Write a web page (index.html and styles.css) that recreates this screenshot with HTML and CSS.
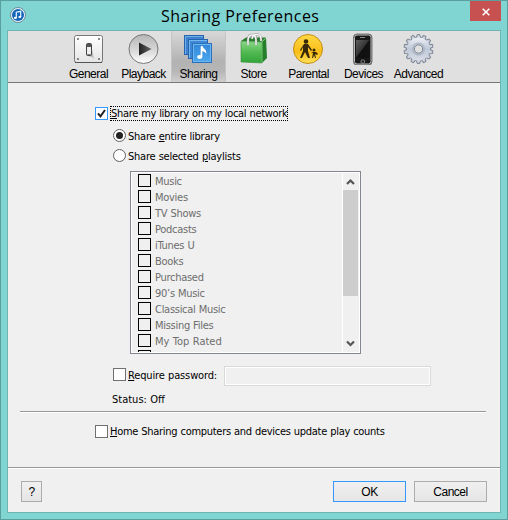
FILE: index.html
```html
<!DOCTYPE html>
<html lang="en">
<head>
<meta charset="utf-8">
<title>Sharing Preferences</title>
<link rel="stylesheet" href="styles.css">
</head>
<body>
<div class="window">
  <header class="titlebar">
    <svg class="app-icon" width="16" height="16" viewBox="0 0 16 16"><circle cx="8" cy="8" r="7.5" fill="#e7f3f8" stroke="#58798c" stroke-width=".8"/><circle cx="8" cy="8" r="6" fill="#1765b8"/><path d="M6.3 10.8V5.2L10.7 4.3V9.9" fill="none" stroke="#e5f7ff" stroke-width="1.2"/><ellipse cx="5.4" cy="10.9" rx="1.5" ry="1.1" fill="#fff"/><ellipse cx="9.8" cy="10" rx="1.5" ry="1.1" fill="#fff"/></svg>
    <h1 class="title"><span>Sharing Preferences</span></h1>
    <button class="close" aria-label="Close"><svg width="8" height="8" viewBox="0 0 8 8"><path d="M.7.7 7.3 7.3M7.3.7.7 7.3" stroke="#fff" stroke-width="1.6"/></svg></button>
  </header>
  <main class="client">
    <nav class="toolbar">
      <div class="tool">
        <svg width="34" height="34" viewBox="0 0 34 34"><defs><linearGradient id="plate" x2="0" y2="1"><stop stop-color="#fff"/><stop offset="1" stop-color="#e4e4e4"/></linearGradient></defs><rect x="2.5" y="4.5" width="28" height="27" rx="2" fill="url(#plate)" stroke="#777"/><path d="M3 31.5H30" stroke="#555"/><g fill="#555"><circle cx="6" cy="8" r=".9"/><circle cx="27" cy="8" r=".9"/><circle cx="6" cy="28" r=".9"/><circle cx="27" cy="28" r=".9"/></g><path d="M15 25 20 26 22 28 20 18z" fill="#bbb"/><rect x="14.5" y="12.5" width="5" height="12" rx="1" fill="#eee" stroke="#444"/><path d="M15 13h4v3h-4z" fill="#555"/><path d="M15 23.5h4" stroke="#888"/></svg>
        <span class="label">General</span>
      </div>
      <div class="tool">
        <svg width="34" height="34" viewBox="0 0 34 34"><defs><linearGradient id="play" x2="0" y2="1"><stop stop-color="#b6b6b6"/><stop offset=".5" stop-color="#d4d4d4"/><stop offset="1" stop-color="#fff"/></linearGradient><linearGradient id="tri"><stop stop-color="#222"/><stop offset="1" stop-color="#666"/></linearGradient></defs><circle cx="16.5" cy="18" r="14.5" fill="url(#play)" stroke="#777"/><path d="M12 11.5 24.5 18 12 24.5z" fill="url(#tri)"/></svg>
        <span class="label">Playback</span>
      </div>
      <div class="tool selected">
        <svg width="34" height="34" viewBox="0 0 34 34"><defs><linearGradient id="blue" x2="0" y2="1"><stop stop-color="#3284d6"/><stop offset="1" stop-color="#4ca9ef"/></linearGradient></defs><rect x="2.5" y="4.5" width="19" height="19" fill="#3d82d1" stroke="#2864ad"/><path d="M3.5 23V5.5H21" fill="none" stroke="#6eafe8"/><rect x="6.5" y="8.5" width="19" height="19" fill="#3c88d7" stroke="#2864ad"/><path d="M7.5 27V9.5H25" fill="none" stroke="#75b6ed"/><rect x="10.5" y="12.5" width="19" height="19" fill="url(#blue)" stroke="#2a70bb"/><rect x="11.5" y="13.5" width="17" height="17" fill="none" stroke="#6eb7ee"/><path d="M19.5 15.5V26" stroke="#fff" stroke-width="1.7"/><path d="M19 15H20.5C21 18 25 18 24.2 23 23.5 20.5 20.5 20.5 20 20z" fill="#fff"/><ellipse cx="17.7" cy="26" rx="2.6" ry="1.9" fill="#fff"/></svg>
        <span class="label">Sharing</span>
      </div>
      <div class="tool">
        <svg width="34" height="34" viewBox="0 0 34 34"><defs><linearGradient id="bag" x2="0" y2="1"><stop stop-color="#8ad788"/><stop offset=".5" stop-color="#51b951"/><stop offset="1" stop-color="#31a438"/></linearGradient></defs><path d="m4 10 5-3.5h20L24 11z" fill="#287d2a"/><path d="M24 11 29 6.5 30 27 25 32z" fill="#257f2b"/><path d="M4 10.5 25 11v21L4 31z" fill="url(#bag)" stroke="#35923a" stroke-width=".6"/><path d="M25 11V32M29 7 25 11" stroke="#7fca7b" stroke-width=".8"/><path d="M11 14V8.5C12 2 19 3 19 9V14M15 8C16 1.5 24 2.5 24 8V10" fill="none" stroke="#8c8c8c" stroke-width="2.4"/><path d="M11 14V8.5C12 2 19 3 19 9V14M15 8C16 1.5 24 2.5 24 8V10" fill="none" stroke="#fafafa" stroke-width="1.4"/></svg>
        <span class="label">Store</span>
      </div>
      <div class="tool">
        <svg width="34" height="34" viewBox="0 0 34 34"><defs><linearGradient id="gold" x2="0" y2="1"><stop stop-color="#ffd944"/><stop offset=".6" stop-color="#f9bd19"/><stop offset="1" stop-color="#ffe25c"/></linearGradient></defs><circle cx="16" cy="18" r="14.5" fill="url(#gold)" stroke="#c58d13"/><circle cx="14" cy="10.5" r="2.3" fill="#382a08"/><path d="m12 13h4l4 6-1 1-3-4v4l2 7h-2l-3-6-3 6H8l3-7v-4l-2 4-1-1z" fill="#382a08"/><circle cx="22" cy="19" r="1.5" fill="#382a08"/><path d="M20 21h4l2 2-1 1-2-1 1 4h-1l-1-3-1 3h-1l1-5-2-1z" fill="#382a08"/></svg>
        <span class="label">Parental</span>
      </div>
      <div class="tool">
        <svg width="34" height="34" viewBox="0 0 34 34"><defs><linearGradient id="screen" x2="1" y2="1"><stop stop-color="#606060"/><stop offset=".48" stop-color="#333"/><stop offset=".5" stop-color="#111"/></linearGradient></defs><rect x="6.5" y="3" width="18.5" height="31" rx="3.5" fill="#202020" stroke="#777"/><rect x="7.5" y="4" width="16.5" height="29" rx="2.5" fill="#171717" stroke="#bdbdbd"/><path d="M9 9h13.5v18H9z" fill="url(#screen)"/><path d="M13 6.5h5" stroke="#888"/><rect x="14" y="29" width="3.5" height="3" rx="1" fill="none" stroke="#999" stroke-width=".8"/></svg>
        <span class="label">Devices</span>
      </div>
      <div class="tool">
        <svg width="34" height="34" viewBox="-16.5 -18 34 34"><defs><linearGradient id="gear" x2="0" y2="1"><stop stop-color="#edf0f5"/><stop offset=".5" stop-color="#bec8d8"/><stop offset="1" stop-color="#d8dde6"/></linearGradient><path id="tooth" d="M-2.3-11-1.2-14.5H1.2L2.3-11V11L1.2 14.5H-1.2L-2.3 11z"/></defs><g fill="#cbd2de" stroke="#7d8695" stroke-width="1"><use href="#tooth"/><use href="#tooth" transform="rotate(25.7)"/><use href="#tooth" transform="rotate(51.4)"/><use href="#tooth" transform="rotate(77.1)"/><use href="#tooth" transform="rotate(102.9)"/><use href="#tooth" transform="rotate(128.6)"/><use href="#tooth" transform="rotate(154.3)"/></g><circle r="11.5" fill="url(#gear)"/><circle r="5.8" fill="none" stroke="#b0b8c6" stroke-width="1.5"/><circle r="4.2" fill="#e0e0e0" stroke="#788292"/></svg>
        <span class="label">Advanced</span>
      </div>
    </nav>
    <section class="settings">
      <div class="row share">
        <span class="check focused"><svg width="11" height="11" viewBox="0 0 11 11"><path d="m2 5.3 2.5 3L9 2" fill="none" stroke="#222" stroke-width="2"/></svg></span>
        <span class="focus-label"><u>S</u>hare my library on my local network</span>
      </div>
      <div class="row option"><span class="radio on"></span><span class="caption">Share <u>e</u>ntire library</span></div>
      <div class="row option second"><span class="radio"></span><span class="caption">Share selected <u>p</u>laylists</span></div>
      <div class="listbox">
        <div class="items">
          <div class="item"><i></i><span>Music</span></div>
          <div class="item"><i></i><span>Movies</span></div>
          <div class="item"><i></i><span>TV Shows</span></div>
          <div class="item"><i></i><span>Podcasts</span></div>
          <div class="item"><i></i><span>iTunes U</span></div>
          <div class="item"><i></i><span>Books</span></div>
          <div class="item"><i></i><span>Purchased</span></div>
          <div class="item"><i></i><span>90’s Music</span></div>
          <div class="item"><i></i><span>Classical Music</span></div>
          <div class="item"><i></i><span>Missing Files</span></div>
          <div class="item wide"><i></i><span>My Top Rated</span></div>
          <div class="item"><i></i></div>
        </div>
        <div class="scrollbar">
          <svg width="15" height="17" viewBox="0 0 15 17"><path d="M4 11 7.5 7.5 11 11" fill="none" stroke="#555" stroke-width="2.2"/></svg>
          <div class="thumb"></div>
          <svg width="15" height="17" viewBox="0 0 15 17"><path d="M4 6.5 7.5 10 11 6.5" fill="none" stroke="#555" stroke-width="2.2"/></svg>
        </div>
      </div>
      <div class="row password"><span class="check"></span><span class="require"><u>R</u>equire password:</span><span class="field"></span></div>
      <div class="status">Status: Off</div>
      <hr>
      <div class="row home"><span class="check"></span><span class="home-label"><u>H</u>ome Sharing computers and devices update play counts</span></div>
    </section>
    <footer class="footer">
      <button class="btn help">?</button>
      <button class="btn primary">OK</button>
      <button class="btn">Cancel</button>
    </footer>
  </main>
</div>
</body>
</html>
```
FILE: styles.css
```css
* { box-sizing: border-box; }
body { margin: 0; font: 11px/16px "DejaVu Sans Condensed", "DejaVu Sans", sans-serif; font-stretch: condensed; color: #000; letter-spacing: -.31px; word-spacing: .3px; }
svg { display: block; flex: none; }
u { text-decoration-thickness: 1px; text-underline-offset: 1px; }
.window { width: 508px; height: 520px; background: #80d4d2; border: 1px solid #5b9e9e; padding: 0 6px 6px; }
.titlebar { height: 29px; display: flex; align-items: flex-start; padding-left: 3px; }
.app-icon { margin-top: 6px; }
.title { flex: 1; margin: 3px 0 0 4px; padding-left: 131px; font: 16px/25px "Open Sans", sans-serif; letter-spacing: .45px; word-spacing: 0; white-space: nowrap; }
.close { width: 31px; height: 20px; border: 0; padding: 1px 0 0; display: flex; align-items: center; justify-content: center; background: #c75050; }
.client { width: 494px; height: 483px; border: 1px solid #6fb5b4; background: #f0f0f0; }
.toolbar { height: 52px; display: flex; padding-left: 53px; background: #e0e0e0; border-bottom: 1px solid #777; }
.tool { width: 55px; display: flex; flex-direction: column; align-items: center; }
.selected { background: linear-gradient(#d8d8d8, #b2b2b2 60%, #b7b7b7 80%, #cfcfcf); border: solid #c5c5c5; border-width: 0 1px; }
.label { font: 12px/16px "Liberation Sans", Arial, sans-serif; letter-spacing: -.5px; margin-top: 1px; }
.settings { height: 384px; padding: 23px 0 0 12px; }
.row { display: flex; align-items: center; height: 15px; white-space: nowrap; }
.share, .home { padding-left: 75px; }
.check { width: 13px; height: 13px; background: #fff; border: 1px solid #707070; flex: none; margin-right: 2px; }
.focused { border-color: #3399ff; }
.focus-label { height: 15px; width: 178px; border: 1px dotted #000; line-height: 14px; }
.option { padding-left: 93px; height: 20px; margin-top: 5px; align-items: flex-start; }
.second { margin-top: 0; }
.radio { width: 13px; height: 13px; border: 1px solid #606060; border-radius: 50%; background: #fff; padding: 2px; margin: 3px 2px 0 0; }
.on::after { content: ""; display: block; width: 7px; height: 7px; border-radius: 50%; background: #222; }
.caption { line-height: 21px; letter-spacing: -.22px; }
.listbox { width: 231px; height: 183px; margin: 5px 0 0 110px; border: 1px solid #828790; outline: 1px solid #fff; outline-offset: -2px; display: flex; padding: 1px; }
.items { flex: 1; padding-left: 6px; overflow: hidden; color: #6d6d6d; padding-top: 1px; letter-spacing: -.28px; }
.item { height: 16px; display: flex; align-items: flex-start; white-space: nowrap; line-height: 15px; }
.item i { width: 13px; height: 13px; border: 1px solid #000; margin-right: 4px; flex: none; }
.wide { letter-spacing: 0; }
.scrollbar { width: 17px; border-left: 1px solid #fff; display: flex; flex-direction: column; }
.thumb { width: 15px; height: 106px; background: #cdcdcd; margin-bottom: 39px; }
.password { padding-left: 93px; height: 20px; margin-top: 12px; }
.password .check { margin-top: -4px; }
.require { letter-spacing: -.14px; }
.field { width: 207px; height: 20px; border: 1px solid #d9d9d9; outline: 1px solid #fff; outline-offset: -2px; margin-left: auto; margin-right: 69px; }
.status { padding-left: 92px; line-height: 16px; margin-top: 6px; letter-spacing: 0; }
hr { width: 466px; height: 2px; margin: 3px 0 0; border: 0; border-top: 1px solid #999; background: #fff; }
.home { margin-top: 11px; }
.home-label { line-height: 18px; letter-spacing: -.28px; }
.footer { height: 45px; border-top: 1px solid #999; box-shadow: inset 0 1px #fff; display: flex; gap: 8px; padding: 13px 13px 0; }
.btn { width: 73px; height: 21px; border: 1px solid #acacac; background: linear-gradient(#f0f0f0, #e5e5e5); padding: 0; font: 12px/18px "Liberation Sans", Arial, sans-serif; letter-spacing: -.5px; color: #000; }
.help { width: 21px; margin-right: auto; }
.primary { border-color: #3399ff; }
```
